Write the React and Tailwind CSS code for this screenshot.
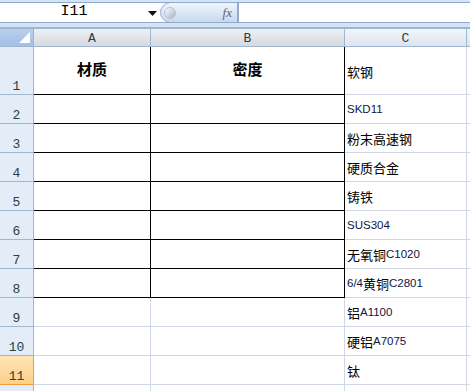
import React from 'react';

const rows = [
  { n: 1, h: 'h-[48px]', a: '材质', b: '密度', c: [['zh', '软钢']], box: true },
  { n: 2, c: [['en', 'SKD11']], box: true },
  { n: 3, c: [['zh', '粉末高速钢']], box: true },
  { n: 4, c: [['zh', '硬质合金']], box: true },
  { n: 5, c: [['zh', '铸铁']], box: true },
  { n: 6, c: [['en', 'SUS304']], box: true },
  { n: 7, c: [['zh', '无氧铜'], ['en', 'C1020']], box: true },
  { n: 8, c: [['en', '6/4'], ['zh', '黄铜'], ['en', 'C2801']], box: true },
  { n: 9, c: [['zh', '铝'], ['en', 'A1100']] },
  { n: 10, c: [['zh', '硬铝'], ['en', 'A7075']] },
  { n: 11, c: [['zh', '钛']], sel: true },
  { n: '', c: [] },
];

const mono = "font-['Liberation_Mono','DejaVu_Sans_Mono',monospace]";

function RowHead({ n, sel }) {
  return (
    <div
      className={`w-[34px] shrink-0 border-r border-b flex items-end justify-center pb-[1px] text-[13px] leading-none text-[#27413e] ${mono} ${
        sel ? 'bg-gradient-to-b from-[#fde6b4] to-[#fcd088] border-[#f29b3c]' : 'bg-[#e4ecf7] border-[#9eb6ce]'
      }`}
    >
      {n}
    </div>
  );
}

export default function App() {
  return (
    <div className="w-[470px] h-[391px] overflow-hidden bg-white font-['Liberation_Sans','Noto_Sans_CJK_SC',sans-serif]">
      {/* formula bar */}
      <div className="h-[2px] bg-[#d6e3f3]" />
      <div className="h-[1px] bg-[#8ea9cf]" />
      <div className="h-[19px] flex bg-white">
        <div className="w-[160px] flex items-center">
          <div className={`flex-1 text-center text-[15px] text-black ${mono}`}>I11</div>
          <svg width="9" height="5" viewBox="0 0 9 5" className="mr-[3px] mt-[2px]">
            <path d="M0 0h9L4.5 5z" fill="#111" />
          </svg>
        </div>
        <div className="w-[78px] -mt-[1px] h-[21px] rounded-l-full border border-[#90aacd] bg-gradient-to-b from-[#eef4fb] via-[#dce8f6] to-[#c7d9ef] flex items-center justify-between pl-[3px] pr-[5px]">
          <div className="w-[12px] h-[12px] rounded-full bg-gradient-to-br from-[#ffffff] to-[#a9b4c2] border border-[#b5c2d2]" />
          <span className="font-['Liberation_Serif',serif] italic text-[13px] text-[#5b6470]">fx</span>
        </div>
        <div className="flex-1 border-l border-[#90aacd]" />
      </div>
      <div className="h-[1px] bg-[#8ea9cf]" />
      <div className="h-[4px] bg-[#d6e3f3]" />
      <div className="h-[2px] bg-[#9eb6ce]" />

      {/* column headers */}
      <div className="flex h-[18px]">
        <div className="w-[34px] shrink-0 border-r border-b border-[#9eb6ce] bg-gradient-to-b from-[#b9d0ee] to-[#a3bfe6] relative">
          <svg width="11" height="11" viewBox="0 0 11 11" className="absolute right-[3px] bottom-[3px]">
            <path d="M11 0V11H0z" fill="#ffffff" />
          </svg>
        </div>
        {[
          ['A', 'w-[117px]', 'from-[#eef0f3] to-[#d5dae1]'],
          ['B', 'w-[194px]', 'from-[#eef0f3] to-[#d5dae1]'],
          ['C', 'w-[122px]', 'from-[#f3f6fb] to-[#dce4ef]'],
        ].map(([l, w, g]) => (
          <div
            key={l}
            className={`${w} shrink-0 border-r border-b border-[#9eb6ce] bg-gradient-to-b ${g} flex items-center justify-center pt-[2px] text-[13px] leading-none text-[#27413e] ${mono}`}
          >
            {l}
          </div>
        ))}
        <div className="flex-1 border-b border-[#9eb6ce] bg-gradient-to-b from-[#f3f6fb] to-[#dce4ef]" />
      </div>

      {/* grid */}
      {rows.map((r, idx) => (
        <div key={idx} className={`flex ${r.h || 'h-[29px]'}`}>
          <RowHead n={r.n} sel={r.sel} />
          <div
            className={`w-[117px] shrink-0 border-r border-b flex items-center justify-center text-[15px] font-bold text-black ${
              r.box ? 'border-black' : 'border-[#d0d7e5]'
            }`}
          >
            {r.a}
          </div>
          <div
            className={`w-[194px] shrink-0 border-r border-b flex items-center justify-center text-[15px] font-bold text-black ${
              r.box ? 'border-black' : 'border-[#d0d7e5]'
            }`}
          >
            {r.b}
          </div>
          <div className="w-[122px] shrink-0 border-r border-b border-[#d0d7e5] flex items-center pl-[2px] pt-[2px] text-black whitespace-nowrap">
            {r.c.map(([k, t], i) =>
              k === 'zh' ? (
                <span key={i} className="text-[13px] font-['Noto_Sans_CJK_SC',sans-serif]">
                  {t}
                </span>
              ) : (
                <span key={i} className="text-[11.5px] text-[#14143c]">
                  {t}
                </span>
              )
            )}
          </div>
          <div className="flex-1 border-b border-[#d0d7e5]" />
        </div>
      ))}
    </div>
  );
}
